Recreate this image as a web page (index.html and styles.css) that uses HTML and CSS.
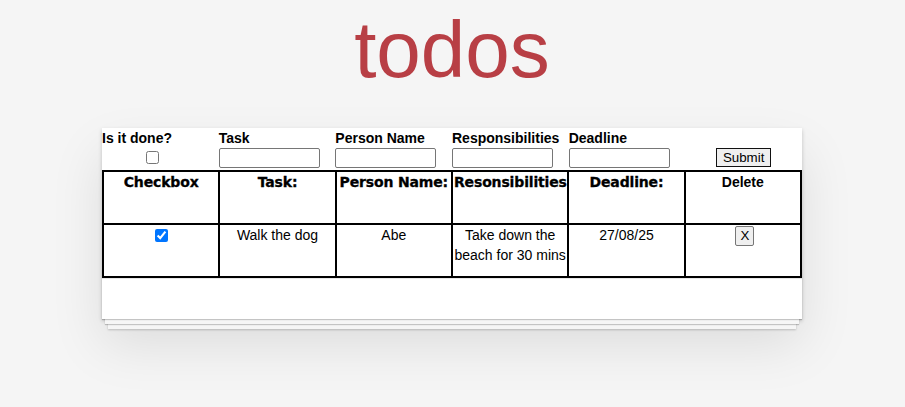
FILE: index.html
```html
<!DOCTYPE html>
<html lang="en">
<head>
<meta charset="utf-8">
<title>todos</title>
<link rel="stylesheet" href="styles.css">
</head>
<body>
<header class="hero">
  <h1 class="title">todos</h1>
</header>
<section class="app">
  <form class="entry">
    <div class="field">
      <label class="field-label">Is it done?</label>
      <span class="check-wrap"><input type="checkbox" class="check"></span>
    </div>
    <div class="field">
      <label class="field-label">Task</label>
      <input type="text" class="text-input">
    </div>
    <div class="field">
      <label class="field-label">Person Name</label>
      <input type="text" class="text-input">
    </div>
    <div class="field">
      <label class="field-label">Responsibilities</label>
      <input type="text" class="text-input">
    </div>
    <div class="field">
      <label class="field-label">Deadline</label>
      <input type="text" class="text-input">
    </div>
    <div class="field field-submit">
      <span class="label-spacer"></span>
      <button type="button" class="submit">Submit</button>
    </div>
  </form>
  <table class="todo-table">
    <thead>
      <tr>
        <th class="heavy">Checkbox</th>
        <th class="heavy">Task:</th>
        <th class="heavy">Person Name:</th>
        <th class="heavy">Resonsibilities</th>
        <th class="heavy">Deadline:</th>
        <th class="plain">Delete</th>
      </tr>
    </thead>
    <tbody>
      <tr>
        <td><input type="checkbox" class="done" checked></td>
        <td>Walk the dog</td>
        <td>Abe</td>
        <td>Take down the beach for 30 mins</td>
        <td>27/08/25</td>
        <td><button type="button" class="delete">X</button></td>
      </tr>
    </tbody>
  </table>
  <footer class="app-footer"></footer>
</section>
</body>
</html>
```
FILE: styles.css
```css
html, body {
  margin: 0;
  padding: 0;
}

html {
  min-height: 100%;
  background: #f5f5f5;
}

body {
  background: #f5f5f5;
  font: 14px "Liberation Sans", Arial, sans-serif;
  line-height: 20px;
  color: #111;
  padding-right: 1px;
  padding-bottom: 40px;
}

.hero {
  padding: 10px 0 38px;
}

.title {
  margin: 0;
  font-size: 80px;
  line-height: 80px;
  font-weight: 400;
  color: #b83f45;
  text-align: center;
}

.app {
  width: 700px;
  margin: 0 auto 40px;
  background: #fff;
  position: relative;
  box-shadow: 0 2px 4px 0 rgba(0, 0, 0, 0.2), 0 25px 50px 0 rgba(0, 0, 0, 0.1);
}

.entry {
  display: grid;
  grid-template-columns: repeat(6, 1fr);
  height: 42px;
}

.field {
  display: flex;
  flex-direction: column;
  align-items: flex-start;
}

.field-label {
  font-weight: bold;
  height: 20px;
  line-height: 20px;
  color: #000;
  white-space: nowrap;
}

.check-wrap {
  width: 101px;
  display: flex;
  justify-content: center;
  padding-top: 3px;
}

.check {
  margin: 0;
  width: 13px;
  height: 13px;
}

.text-input {
  width: 101px;
  height: 20px;
  box-sizing: border-box;
  margin: 0;
  padding: 1px 2px;
  border: 1px solid #767676;
  border-radius: 2px;
  font: 13.33px "Liberation Sans", Arial, sans-serif;
}

.field-submit {
  align-items: center;
}

.label-spacer {
  display: block;
  height: 20px;
}

.submit {
  height: 19px;
  box-sizing: border-box;
  margin: 0;
  padding: 0 6px;
  border: 1px solid #111;
  border-radius: 0;
  background: #efefef;
  color: #000;
  font: 13.33px "Liberation Sans", Arial, sans-serif;
  line-height: 17px;
}

.todo-table {
  width: 100%;
  table-layout: fixed;
  border-collapse: collapse;
}

.todo-table th,
.todo-table td {
  border: 2px solid #000;
  padding: 0 1px;
  height: 51px;
  vertical-align: top;
  text-align: center;
  color: #000;
}

.todo-table td {
  font-weight: normal;
}

.heavy {
  font-family: "DejaVu Sans", sans-serif;
  font-weight: bold;
  font-size: 14px;
  letter-spacing: -0.15px;
  -webkit-text-stroke: 0.3px #000;
  white-space: nowrap;
}

.plain {
  font-weight: bold;
}

.done {
  display: block;
  margin: 4px auto 0;
  width: 13px;
  height: 13px;
}

.delete {
  margin: 1px 0 0 4px;
  height: 20px;
  box-sizing: border-box;
  padding: 0 4px;
  border: 1px solid #767676;
  border-radius: 2px;
  background: #efefef;
  color: #000;
  font: 13.33px "Liberation Sans", Arial, sans-serif;
  line-height: 18px;
  vertical-align: top;
}

.app-footer {
  height: 40px;
  border-top: 1px solid #e6e6e6;
  position: relative;
}

.app-footer::before {
  content: "";
  position: absolute;
  right: 0;
  bottom: 0;
  left: 0;
  height: 50px;
  overflow: hidden;
  box-shadow: 0 1px 1px rgba(0, 0, 0, 0.2),
    0 8px 0 -3px #f6f6f6,
    0 9px 1px -3px rgba(0, 0, 0, 0.2),
    0 16px 0 -6px #f6f6f6,
    0 17px 2px -6px rgba(0, 0, 0, 0.2);
}
```
